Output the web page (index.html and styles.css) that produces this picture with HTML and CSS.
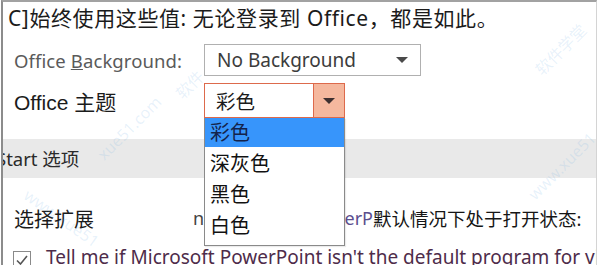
FILE: index.html
```html
<!DOCTYPE html>
<html lang="zh-CN">
  <head>
    <meta charset="UTF-8">
    <link rel="stylesheet" href="styles.css">
  </head>
  <body>
    <div class="frame">
      <div class="title">C]始终使用这些值: 无论登录到 Office，都是如此。</div>

      <div class="row row-bg">
        <label class="label label-muted">Office <u>B</u>ackground:</label>
        <div class="select select-bg">
          <span class="select-text">No Background</span>
          <span class="select-arrow"></span>
        </div>
      </div>

      <div class="row row-theme">
        <label class="label label-theme">Office 主题</label>
        <div class="select select-theme">
          <span class="select-text">彩色</span>
          <span class="select-btn"><span class="select-arrow"></span></span>
          <ul class="dropdown">
            <li class="opt opt-active">彩色</li>
            <li class="opt">深灰色</li>
            <li class="opt">黑色</li>
            <li class="opt">白色</li>
          </ul>
        </div>
      </div>

      <div class="section">Start 选项</div>

      <div class="row row-ext">
        <span class="label label-ext">选择扩展</span>
        <span class="ext-note"><span class="ext-n">n</span><span class="ext-v">verP</span></span>
        <span class="ext-text">默认情况下处于打开状态:</span>
      </div>

      <div class="row row-check">
        <span class="checkbox">
          <svg viewBox="0 0 16 16" width="16" height="16"><path d="M3 8.5 L6.5 12 L13 4" fill="none" stroke="#555" stroke-width="1.6"/></svg>
        </span>
        <span class="check-text">Tell me if Microsoft PowerPoint isn't the default program for viewing and editing presentations.</span>
      </div>

      <span class="wm wm-1">xue51.com</span>
      <span class="wm wm-2">软件学堂</span>
      <span class="wm wm-3">www.xue51.com</span>
      <span class="wm wm-4">软件</span>
      <span class="wm wm-5">www.xue51</span>
    </div>
  </body>
</html>
```

FILE: styles.css
```css
html, body {
  margin: 0;
  padding: 0;
  background: #fff;
}

body {
  font-family: "Noto Sans", "Noto Sans CJK SC", sans-serif;
  color: #1b1b1b;
}

.frame {
  position: relative;
  width: 593px;
  height: 263px;
  margin-left: 1px;
  border-top: 2px solid #a2a2a2;
  border-left: 2px solid #8c8c8c;
  border-right: 1px solid #d4d4d4;
  overflow: hidden;
}

.title {
  padding: 1px 0 0 5px;
  font-size: 21px;
  line-height: 30px;
  letter-spacing: 0.6px;
  white-space: nowrap;
}

.row {
  display: flex;
  align-items: center;
  white-space: nowrap;
}

.label {
  padding-left: 11px;
  width: 190px;
  flex: none;
}

.label-muted {
  color: #5a5a5a;
  font-size: 18.5px;
  letter-spacing: 0.1px;
}

.label-theme {
  font-size: 21px;
  font-family: "Liberation Sans", "Noto Sans CJK SC", sans-serif;
}

.row-bg {
  margin-top: 11px;
}

.select {
  position: relative;
  display: flex;
  align-items: center;
  box-sizing: border-box;
}

.select-bg {
  width: 217px;
  height: 32px;
  border: 1px solid #b0b0b0;
  padding: 0 12px 0 12px;
  justify-content: space-between;
}

.select-bg .select-text {
  font-size: 19px;
  color: #3c3c3c;
}

.select-arrow {
  width: 0;
  height: 0;
  border-left: 6px solid transparent;
  border-right: 6px solid transparent;
  border-top: 6px solid #4a4a4a;
}

.row-theme {
  margin-top: 7px;
}

.select-theme {
  width: 141px;
  height: 35px;
  border: 1px solid #dd6a4c;
}

.select-theme .select-text {
  flex: 1;
  padding-left: 11px;
  font-size: 19.5px;
}

.select-btn {
  display: flex;
  align-items: center;
  justify-content: center;
  width: 30px;
  height: 100%;
  border-left: 1px solid #dd6a4c;
  background: #f5b89e;
}

.select-btn .select-arrow {
  border-top-color: #3e3030;
}

.dropdown {
  position: absolute;
  z-index: 2;
  left: -1px;
  top: 34px;
  width: 141px;
  box-sizing: border-box;
  margin: 0;
  padding: 0 0 4px;
  list-style: none;
  background: #fff;
  border: 1px solid #8a8a8a;
  border-top: none;
  box-shadow: 1px 1px 1px rgba(0, 0, 0, 0.08);
}

.opt {
  height: 31px;
  line-height: 31px;
  padding-left: 5px;
  font-size: 20px;
  color: #111;
}

.opt-active {
  height: 29px;
  line-height: 29px;
  margin-bottom: 1px;
  background: #3795fb;
  color: #14234a;
}

.section {
  margin-top: 21px;
  height: 39px;
  line-height: 39px;
  margin-left: -7px;
  background: #e9e9e9;
  font-size: 18.5px;
  color: #2a2a2a;
}

.row-ext {
  margin-top: 22px;
  height: 36px;
}

.label-ext {
  width: 179px;
  font-size: 20px;
}

.ext-note {
  display: inline-flex;
  width: 180px;
  font-size: 18px;
  color: #444;
}

.ext-n {
  width: 143px;
}

.ext-v {
  color: #5b4e8e;
}

.ext-text {
  font-size: 18.5px;
  color: #151515;
}

.row-check {
  margin-top: 8px;
  padding-left: 10px;
}

.checkbox {
  flex: none;
  display: flex;
  width: 16px;
  height: 16px;
  border: 1px solid #8a8a8a;
  margin-right: 15px;
  margin-top: 6px;
}

.check-text {
  font-size: 19px;
  color: #4e2c4a;
}

.wm {
  position: absolute;
  z-index: 3;
  color: rgba(110, 170, 225, 0.16);
  font-size: 16px;
  transform: rotate(-45deg);
  pointer-events: none;
  white-space: nowrap;
}

.wm-1 { left: 85px; top: 115px; }
.wm-2 { left: 525px; top: 35px; }
.wm-3 { left: 510px; top: 140px; }
.wm-4 { left: 170px; top: 70px; }
.wm-5 { left: 15px; top: 205px; transform: rotate(35deg); }
```
